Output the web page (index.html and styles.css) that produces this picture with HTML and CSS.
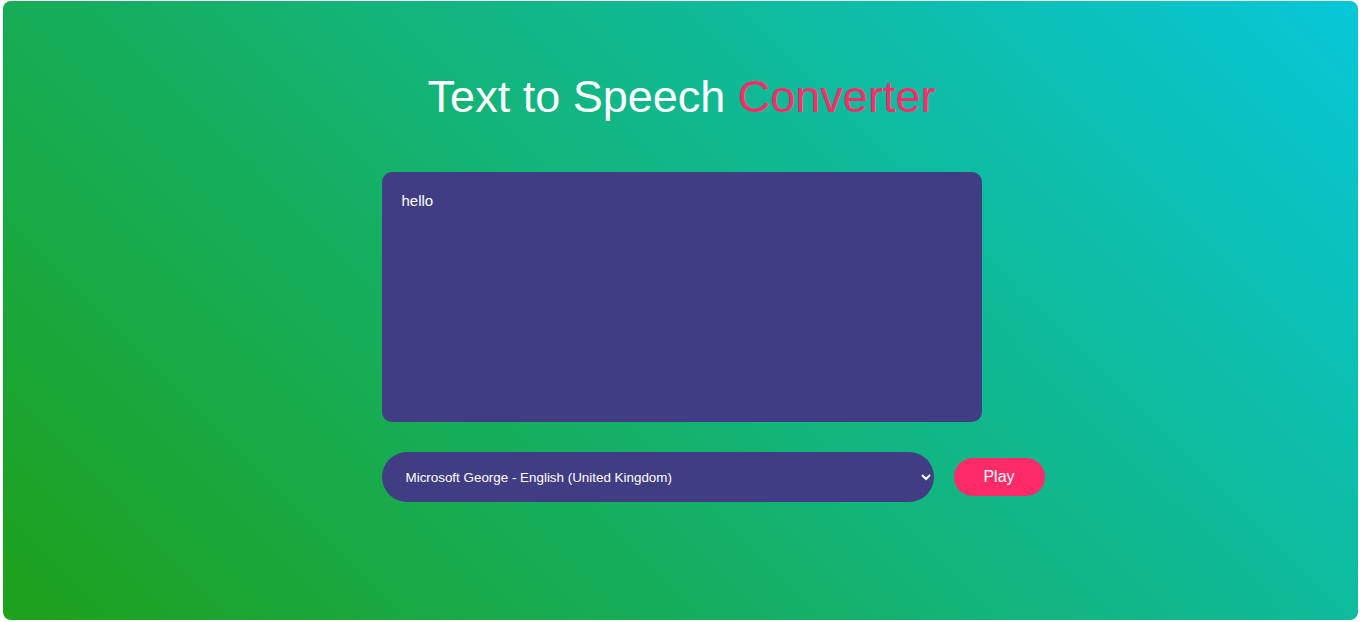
FILE: index.html
```html
<!DOCTYPE html>
<html lang="en">
<head>
<meta charset="utf-8">
<title>Text to Speech Converter</title>
<link rel="stylesheet" href="styles.css">
</head>
<body>
<div class="hero">
  <h1 class="title">Text to Speech <span class="accent">Converter</span></h1>
  <div class="panel">
    <textarea class="input">hello</textarea>
    <div class="controls">
      <select class="voice">
        <option>Microsoft George - English (United Kingdom)</option>
      </select>
      <button class="play">Play</button>
    </div>
  </div>
</div>
</body>
</html>
```
FILE: styles.css
```css
html, body {
  margin: 0;
  height: 100%;
  background: #ffffff;
}
body {
  padding: 1px 2px 2px 3px;
  box-sizing: border-box;
  font-family: "Liberation Sans", Arial, sans-serif;
}
.hero {
  height: 100%;
  box-sizing: border-box;
  border-radius: 8px;
  background: linear-gradient(45deg, #1ea11a 0%, #07c7d8 100%);
  display: flex;
  flex-direction: column;
  align-items: center;
  padding: 70px 0 0 2px;
}
.title {
  margin: 0 0 49px;
  font-size: 45px;
  font-weight: 400;
  line-height: normal;
  color: #ffffff;
}
.accent {
  color: #ff2a68;
}
.panel {
  width: 600px;
  display: flex;
  flex-direction: column;
}
.input {
  width: 600px;
  height: 250px;
  box-sizing: border-box;
  padding: 20px;
  border: none;
  outline: none;
  resize: none;
  border-radius: 10px;
  background: #413d85;
  color: #ffffff;
  font-family: "Liberation Sans", Arial, sans-serif;
  font-size: 15px;
}
.controls {
  margin-top: 30px;
  display: flex;
  align-items: center;
  gap: 20px;
}
.voice {
  flex: none;
  width: 552px;
  height: 50px;
  box-sizing: border-box;
  padding: 0 6px 0 20px;
  border: none;
  outline: none;
  border-radius: 25px;
  background: #413d85;
  color: #ffffff;
  font-family: "Liberation Sans", Arial, sans-serif;
  font-size: 13.4px;
}
.play {
  flex: none;
  width: 91px;
  height: 38px;
  border: none;
  border-radius: 19px;
  background: #ff2a68;
  color: #ffffff;
  font-family: "Liberation Sans", Arial, sans-serif;
  font-size: 16px;
  cursor: pointer;
}
```
